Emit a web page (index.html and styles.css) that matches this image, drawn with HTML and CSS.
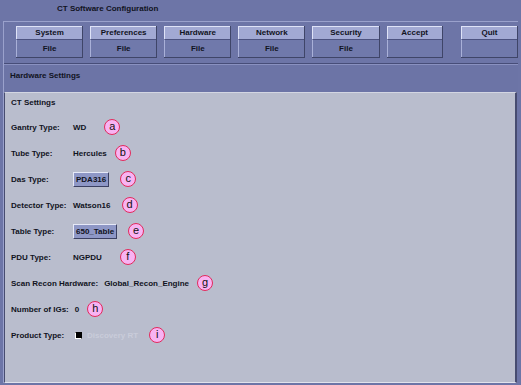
FILE: index.html
```html
<!DOCTYPE html>
<html>
<head>
	<meta charset="utf-8">
	<title>CT Software Configuration</title>
	<link rel="stylesheet" href="styles.css">
</head>
<body>
	<div class="window">
		<div class="title">CT Software Configuration</div>
		<div class="frame">
			<div class="toolbar">
				<div class="tool"><div class="tool-top">System</div><div class="tool-bottom">File</div></div>
				<div class="tool"><div class="tool-top">Preferences</div><div class="tool-bottom">File</div></div>
				<div class="tool"><div class="tool-top">Hardware</div><div class="tool-bottom">File</div></div>
				<div class="tool"><div class="tool-top">Network</div><div class="tool-bottom">File</div></div>
				<div class="tool"><div class="tool-top">Security</div><div class="tool-bottom">File</div></div>
				<div class="tool tool-accept"><div class="tool-top">Accept</div><div class="tool-bottom"></div></div>
				<div class="tool tool-quit"><div class="tool-top">Quit</div><div class="tool-bottom"></div></div>
			</div>
			<div class="section-head">Hardware Settings</div>
			<div class="panel">
				<div class="panel-title">CT Settings</div>
				<div class="row">
					<span class="label">Gantry Type:</span>
					<span class="value">WD</span>
					<span class="mark mark-wide">a</span>
				</div>
				<div class="row">
					<span class="label">Tube Type:</span>
					<span class="value">Hercules</span>
					<span class="mark mark-near">b</span>
				</div>
				<div class="row">
					<span class="label">Das Type:</span>
					<span class="pick">PDA316</span>
					<span class="mark">c</span>
				</div>
				<div class="row">
					<span class="label">Detector Type:</span>
					<span class="value">Watson16</span>
					<span class="mark">d</span>
				</div>
				<div class="row">
					<span class="label">Table Type:</span>
					<span class="pick">650_Table</span>
					<span class="mark">e</span>
				</div>
				<div class="row">
					<span class="label">PDU Type:</span>
					<span class="value">NGPDU</span>
					<span class="mark mark-wide">f</span>
				</div>
				<div class="row">
					<span class="label">Scan Recon Hardware:</span>
					<span class="value">Global_Recon_Engine</span>
					<span class="mark mark-near">g</span>
				</div>
				<div class="row">
					<span class="label">Number of IGs:</span>
					<span class="value">0</span>
					<span class="mark mark-near">h</span>
				</div>
				<div class="row">
					<span class="label">Product Type:</span>
					<span class="check"></span>
					<span class="value disabled">Discovery RT</span>
					<span class="mark">i</span>
				</div>
			</div>
		</div>
	</div>
</body>
</html>
```

FILE: styles.css
```css
body {
	margin: 0;
	background-color: #6d75a7;
	font-family: "Liberation Sans", Arial, sans-serif;
	font-size: 8px;
	font-weight: bold;
	color: #111322;
}
.window {
	width: 521px;
	height: 385px;
	overflow: hidden;
	background-color: #6d75a7;
}
.title {
	height: 21px;
	line-height: 18px;
	padding-left: 57px;
}
.frame {
	margin-left: 3px;
	margin-right: 3px;
	border-top: 1px solid #9aa1cc;
	border-left: 1px solid #9aa1cc;
}
.toolbar {
	display: flex;
	gap: 7px;
	height: 32px;
	padding: 4px 0 5px 12px;
	border-bottom: 1px solid #474d78;
}
.tool {
	width: 67px;
	display: flex;
	flex-direction: column;
	border-right: 1px solid #3f4568;
	border-bottom: 1px solid #3f4568;
}
.tool-accept {
	width: 56px;
}
.tool-quit {
	width: 57px;
	margin-left: 11px;
}
.tool-top {
	height: 12px;
	line-height: 12px;
	text-align: center;
	background-color: #a2a9d3;
	border-top: 1px solid #dfe3f7;
	border-left: 1px solid #dfe3f7;
}
.tool-bottom {
	flex: 1;
	line-height: 17px;
	text-align: center;
	background-color: #7079ab;
	border-top: 1px solid #4d5380;
	border-left: 1px solid #a9b0d8;
}
.section-head {
	height: 27px;
	line-height: 22px;
	padding-left: 6px;
	border-top: 1px solid #8a91c0;
	background-color: #6c74a6;
}
.panel {
	height: 289px;
	margin-right: 1px;
	padding-left: 6px;
	background-color: #b9bdcd;
	border-top: 1px solid #d3d6e2;
	border-left: 1px solid #474c70;
	border-right: 2px solid #474c70;
	border-bottom: 1px solid #e1e3ec;
}
.panel-title {
	height: 21px;
	line-height: 19px;
}
.row {
	display: flex;
	align-items: center;
	height: 26px;
}
.label {
	box-sizing: border-box;
	min-width: 62px;
	padding-right: 6px;
}
.value.disabled {
	color: #c9ccda;
	margin-left: 5px;
}
.pick {
	height: 13px;
	line-height: 13px;
	padding: 0 2px;
	background-color: #8e97c6;
	border: 1px solid #e6e9f7;
	border-right-color: #3b4062;
	border-bottom-color: #3b4062;
}
.check {
	box-sizing: border-box;
	width: 7px;
	height: 7px;
	margin-left: 2px;
	background-color: #000;
	border: 1px solid #000;
	border-left-color: #fff;
	border-bottom-color: #fff;
}
.mark {
	box-sizing: border-box;
	width: 16px;
	height: 16px;
	margin-left: 11px;
	border-radius: 50%;
	border: 1px solid #e22a5c;
	background-color: #f8b3f2;
	color: #111;
	font-family: "Liberation Sans", Arial, sans-serif;
	font-weight: normal;
	font-size: 11px;
	line-height: 13px;
	text-align: center;
}
.mark-wide {
	margin-left: 18px;
}
.mark-near {
	margin-left: 8px;
}
```
